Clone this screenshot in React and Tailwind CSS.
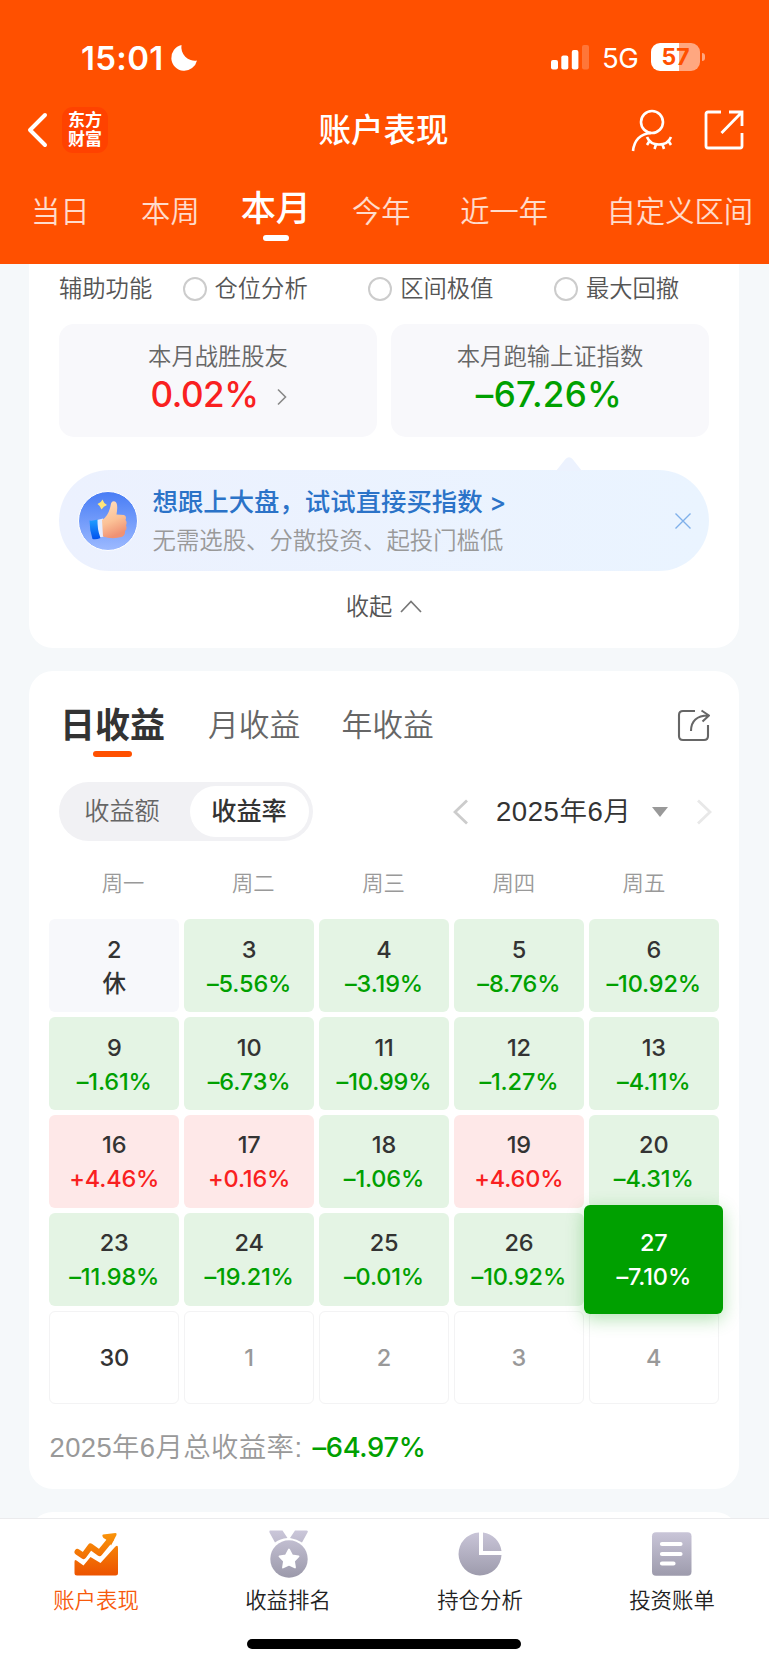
const ranges = [
  { label: '当日', cls: 'ml-[31px]' },
  { label: '本周', cls: 'ml-[51.5px]' },
  { label: '本月', cls: 'ml-[41px]', active: true },
  { label: '今年', cls: 'ml-[41px]' },
  { label: '近一年', cls: 'ml-[49.5px]' },
  { label: '自定义区间', cls: 'ml-[58.5px]' },
]

const helpers = ['仓位分析', '区间极值', '最大回撤']

const weekdays = ['周一', '周二', '周三', '周四', '周五']

const days = [
  { day: '2', rest: true },
  { day: '3', rate: -5.56 },
  { day: '4', rate: -3.19 },
  { day: '5', rate: -8.76 },
  { day: '6', rate: -10.92 },
  { day: '9', rate: -1.61 },
  { day: '10', rate: -6.73 },
  { day: '11', rate: -10.99 },
  { day: '12', rate: -1.27 },
  { day: '13', rate: -4.11 },
  { day: '16', rate: 4.46 },
  { day: '17', rate: 0.16 },
  { day: '18', rate: -1.06 },
  { day: '19', rate: 4.6 },
  { day: '20', rate: -4.31 },
  { day: '23', rate: -11.98 },
  { day: '24', rate: -19.21 },
  { day: '25', rate: -0.01 },
  { day: '26', rate: -10.92 },
  { day: '27', rate: -7.1, selected: true },
  { day: '30' },
  { day: '1', next: true },
  { day: '2', next: true },
  { day: '3', next: true },
  { day: '4', next: true },
]

function formatRate(r) {
  return `${r < 0 ? '–' : '+'}${Math.abs(r).toFixed(2)}%`
}

function StatusBar() {
  return (
    <div className="flex h-[98px] items-start pl-[81px] pr-[64px] pt-[38px]">
      <span className="w-[85px] text-[33px] font-semibold leading-[40px] tracking-[0.3px] whitespace-nowrap">15:01</span>
      <svg className="mt-[6px] ml-[4px] h-[28px] w-[28px]" viewBox="0 0 28 28" fill="white">
        <path d="M11.500 1 A13 13 0 1 0 27 16.500 A13.500 13.500 0 0 1 11.500 1Z" />
      </svg>
      <div className="flex-1" />
      <svg className="mt-[6px] h-[26px] w-[39px]" viewBox="0 0 39 26" fill="white">
        <rect x="0" y="16" width="7" height="9.500" rx="2" />
        <rect x="10.300" y="11.500" width="7" height="14" rx="2" />
        <rect x="20.800" y="6" width="6.600" height="19.500" rx="2" />
        <rect x="31" y="1" width="7" height="24.500" rx="2" opacity=".22" />
      </svg>
      <span className="ml-[12px] w-[49px] text-[27.500px] leading-[40px] tracking-[-0.500px]">5G</span>
      <div className="mt-[5px] flex h-[28px] w-[49px] items-center justify-center rounded-[9px] bg-[linear-gradient(90deg,#fff_58%,#ffa780_58%)] text-[23px] font-bold leading-none text-[#ff5000]">
        57
      </div>
      <div className="ml-[2px] mt-[15px] h-[8px] w-[3px] rounded-r-full bg-[#ffa780]" />
    </div>
  )
}

function Header() {
  return (
    <header className="h-[264px] shrink-0 bg-[#ff5000] text-white">
      <StatusBar />
      <div className="flex h-[64px] items-center pl-[27px] pr-[24px]">
        <svg className="h-[36px] w-[21px]" viewBox="0 0 21 36" fill="none" stroke="white" strokeWidth="4" strokeLinecap="round" strokeLinejoin="round">
          <path d="M18 3 L3 18 L18 33" />
        </svg>
        <div className="ml-[14px] grid h-[46px] w-[46px] place-content-center rounded-[11px] bg-[#ff4200] text-center text-[17px] font-bold leading-[19px]">
          <span>东方</span>
          <span>财富</span>
        </div>
        <h1 className="flex-1 pl-[82px] pr-[54px] pt-[1px] text-center text-[32.500px] font-medium leading-[40px] whitespace-nowrap">账户表现</h1>
        <svg className="h-[44px] w-[42px]" viewBox="0 0 42 44" fill="none" stroke="white" strokeWidth="2.600">
          <circle cx="21" cy="14" r="11" />
          <path d="M2 43 C3 33 9 25.500 20 25" />
          <path d="M16 29 C20 39 36 39 40 29 M18.500 33 L16 37 M25 36.500 L23.500 41 M31.500 36.500 L33 41 M37.500 33 L40 37" />
        </svg>
        <svg className="ml-[30px] h-[42px] w-[42px]" viewBox="0 0 42 42" fill="none" stroke="white" strokeWidth="2.800">
          <path d="M18 3 H5 a2 2 0 0 0 -2 2 V37 a2 2 0 0 0 2 2 H37 a2 2 0 0 0 2 -2 V24" />
          <path d="M26 3 H39 V17 M39 3 L18.500 24" />
        </svg>
      </div>
      <nav className="flex h-[96px] items-center whitespace-nowrap">
        {ranges.map((r) =>
          r.active ? (
            <div key={r.label} className={`${r.cls} flex flex-col items-center pt-[7px]`}>
              <span className="text-[35.200px] font-medium leading-[44px]">{r.label}</span>
              <span className="mt-[5px] h-[6px] w-[26px] rounded-full bg-white" />
            </div>
          ) : (
            <span key={r.label} className={`${r.cls} pt-[4px] text-[29.300px] font-[350] leading-[40px] text-white/80`}>
              {r.label}
            </span>
          )
        )}
      </nav>
    </header>
  )
}

function ThumbBadge() {
  return (
    <svg className="h-[60px] w-[60px] shrink-0" viewBox="0 0 60 60">
      <defs>
        <linearGradient id="badge" x1="0" y1="0" x2="0" y2="1">
          <stop offset="0" stopColor="#477cf5" />
          <stop offset="1" stopColor="#9dbaff" />
        </linearGradient>
        <linearGradient id="hand" x1="0" y1="0" x2="0.3" y2="1">
          <stop offset="0" stopColor="#ffe0c0" />
          <stop offset="0.6" stopColor="#fbc196" />
          <stop offset="1" stopColor="#ef9274" />
        </linearGradient>
        <linearGradient id="cuff" x1="0" y1="0" x2="0" y2="1">
          <stop offset="0" stopColor="#1fa0ff" />
          <stop offset="1" stopColor="#0050ee" />
        </linearGradient>
      </defs>
      <circle cx="30" cy="30" r="29.500" fill="url(#badge)" stroke="white" strokeWidth="1" />
      <path d="M19 29 L25 27.500 L26 45.500 L20 47Z" fill="#e4ecff" />
      <path d="M11.500 29.500 Q15 30 19.500 28.500 Q19 38 22.500 47 Q18 49 14.500 48 Q11.500 39 11.500 29.500Z" fill="url(#cuff)" />
      <path d="M24 29 Q31 25 33 12.500 Q34 9.500 37 10.500 Q40.500 12 38.500 23.500 L46 24 Q49 25 47.500 29 Q49.500 31 48 34.500 Q49.500 38 47 40 Q47.500 44.500 43.500 46 Q34 48.500 25 45.500Z" fill="url(#hand)" />
      <path d="M24.500 8.500 Q25.500 12 29 14 Q25.500 15 23.500 18.500 Q22.500 15 19.500 13 Q23 12 24.500 8.500Z" fill="#ffe57a" />
    </svg>
  )
}

function Overview() {
  return (
    <section className="ml-[29px] mr-[30px] h-[384px] shrink-0 rounded-b-[24px] bg-white px-[30px]">
      <div className="flex h-[60px] items-center pb-[10px] text-[23.300px] font-[350] leading-[36px] text-[#555] whitespace-nowrap">
        <span className="w-[123.500px] shrink-0">辅助功能</span>
        {helpers.map((h) => (
          <label key={h} className="flex w-[185.700px] shrink-0 items-center gap-[8px]">
            <span className="h-[24px] w-[24px] rounded-full border-2 border-[#ccc]" />
            {h}
          </label>
        ))}
      </div>
      <div className="grid grid-cols-2 gap-[14px] text-center">
        <div className="h-[113px] rounded-[15px] bg-[#f8f8fb] pt-[15px]">
          <p className="text-[23.300px] font-[350] leading-[36px] text-[#666]">本月战胜股友</p>
          <div className="flex h-[38px] items-center justify-center gap-[18px] pl-[1px]">
            <span className="text-[35px] font-medium leading-[38px] tracking-[-0.400px] text-[#f92020]">0.02%</span>
            <svg className="mt-[6px] h-[18px] w-[10px]" viewBox="0 0 10 18" fill="none" stroke="#888" strokeWidth="1.600">
              <path d="M1 1.500 L8.500 9 L1 16.500" />
            </svg>
          </div>
        </div>
        <div className="h-[113px] rounded-[15px] bg-[#f8f8fb] pt-[15px]">
          <p className="text-[23.300px] font-[350] leading-[36px] text-[#666]">本月跑输上证指数</p>
          <p className="pr-[2px] text-[35px] font-medium leading-[38px] tracking-[0.300px] text-[#00a000]">–67.26%</p>
        </div>
      </div>
      <div className="relative mt-[33px] flex h-[101px] items-center rounded-full bg-linear-to-r from-[#ecf1fe] to-[#eaf4ff] pl-[18.500px] pr-[17px]">
        <svg className="absolute -top-[13px] left-[497px] h-[14px] w-[26px]" viewBox="0 0 26 14" fill="#ecf2fe">
          <path d="M0 14 L9.500 2 Q13 -1.500 16.500 2 L26 14Z" />
        </svg>
        <ThumbBadge />
        <div className="ml-[15px] flex-1 pt-[1px] whitespace-nowrap">
          <p className="text-[25.400px] font-medium leading-[38px] text-[#2b73c8]">想跟上大盘，试试直接买指数 &gt;</p>
          <p className="pt-[1px] text-[23.400px] font-[350] leading-[38px] text-[#999]">无需选股、分散投资、起投门槛低</p>
        </div>
        <svg className="h-[18px] w-[18px]" viewBox="0 0 18 18" stroke="#7fb0ea" strokeWidth="1.400">
          <path d="M1.500 1.500 L16.500 16.500 M16.500 1.500 L1.500 16.500" />
        </svg>
      </div>
      <div className="flex h-[72px] items-center justify-center gap-[8px] pt-[1px] text-[23.300px] font-[350] text-[#555]">
        收起
        <svg className="-mt-[2px] h-[13px] w-[22px]" viewBox="0 0 22 13" fill="none" stroke="#777" strokeWidth="1.700">
          <path d="M1 12 L11 1.500 L21 12" />
        </svg>
      </div>
    </section>
  )
}

function DayCell({ d }) {
  if (d.rate == null && !d.rest) {
    return (
      <div className={`flex items-center justify-center rounded-[6px] border border-[#f3f3f4] bg-white ${d.next ? 'text-[#999]' : 'text-[#333]'}`}>
        {d.day}
      </div>
    )
  }
  let tone = 'bg-[#e4f4e4] text-[#00a000]'
  if (d.rest) tone = 'bg-[#f7f8fb] text-[#333]'
  else if (d.rate > 0) tone = 'bg-[#fee8e8] text-[#f92020]'
  if (d.selected) tone = 'relative z-10 -mx-[4.400px] -my-[8px] bg-[#00a000] text-white shadow-[0_5px_18px_rgba(0,160,0,0.3)]'
  return (
    <div className={`flex flex-col items-center justify-center rounded-[6px] pt-[2px] leading-[34px] ${tone}`}>
      <span className={d.selected ? 'text-white' : 'text-[#333]'}>{d.day}</span>
      <span>{d.rest ? '休' : formatRate(d.rate)}</span>
    </div>
  )
}

function Calendar() {
  return (
    <section className="ml-[29px] mr-[30px] mt-[23px] h-[818px] shrink-0 rounded-[24px] bg-white pt-[24px]">
      <div className="flex h-[68px] items-start pl-[31px] pr-[29px] whitespace-nowrap">
        <div className="flex flex-col items-center">
          <span className="text-[35px] font-bold leading-[60px] text-[#333]">日收益</span>
          <span className="-mt-[4px] h-[6px] w-[39px] rounded-full bg-[#ff5000]" />
        </div>
        <span className="ml-[43px] text-[30.800px] font-[350] leading-[60px] text-[#666]">月收益</span>
        <span className="ml-[41px] text-[30.800px] font-[350] leading-[60px] text-[#666]">年收益</span>
        <svg className="ml-auto mt-[14px] h-[34px] w-[33px]" viewBox="0 0 33 34" fill="none" stroke="#666" strokeWidth="2.100" strokeLinejoin="round">
          <path d="M18 2 H6 Q2 2 2 6 V27 Q2 31 6 31 H27 Q31 31 31 27 V16" />
          <path d="M14 22 C14 12 20 6.500 31 6.500 M24.500 1.500 L32 6.500 L25.500 12.500" />
        </svg>
      </div>
      <div className="mt-[19px] flex h-[59px] items-center pl-[30px] pr-[27px]">
        <div className="flex h-[59px] w-[254px] items-center rounded-full bg-[#f1f1f4] p-[4px] text-[25.200px] leading-[51px]">
          <span className="flex-1 pr-[9px] text-center font-[350] text-[#666]">收益额</span>
          <span className="w-[119px] rounded-full bg-white pr-[1px] text-center font-medium text-[#333]">收益率</span>
        </div>
        <svg className="ml-[140px] h-[26px] w-[15px]" viewBox="0 0 15 26" fill="none" stroke="#ccc" strokeWidth="2.800">
          <path d="M14 1.500 L2 13 L14 24.500" />
        </svg>
        <span className="ml-[28px] w-[134px] font-['Liberation_Sans','Noto_Sans_CJK_SC',sans-serif] text-[27.600px] font-[350] leading-[40px] tracking-[0.500px] text-[#333] whitespace-nowrap">2025年6月</span>
        <svg className="ml-[22px] h-[10px] w-[16px]" viewBox="0 0 16 10" fill="#999">
          <path d="M0 0 H16 L8 10Z" />
        </svg>
        <svg className="ml-auto h-[26px] w-[15px]" viewBox="0 0 15 26" fill="none" stroke="#e8e8e8" strokeWidth="2.800">
          <path d="M1 1.500 L13 13 L1 24.500" />
        </svg>
      </div>
      <div className="mt-[22px] grid h-[40px] grid-cols-5 pl-[29px] pr-[30px] text-center text-[21.300px] font-[350] leading-[40px] text-[#999]">
        {weekdays.map((w) => (
          <span key={w}>{w}</span>
        ))}
      </div>
      <div className="mx-[20px] mt-[16px] grid h-[485px] grid-cols-5 grid-rows-5 gap-[4.400px] text-[23.500px] font-medium tracking-[-0.150px]">
        {days.map((d, i) => (
          <DayCell key={i} d={d} />
        ))}
      </div>
      <p className="ml-[20.500px] mt-[24px] font-['Liberation_Sans','Noto_Sans_CJK_SC',sans-serif] text-[27.400px] font-[350] leading-[40px] tracking-[0.400px] text-[#999] whitespace-nowrap">
        2025年6月总收益率:
        <span className="ml-[10px] font-['Inter',sans-serif] text-[27.300px] font-medium tracking-[-0.300px] text-[#00a000]">–64.97%</span>
      </p>
    </section>
  )
}

function ChartIcon() {
  return (
    <svg className="h-[48px] w-[48px]" viewBox="0 0 48 48">
      <defs>
        <linearGradient id="orange" x1="0" y1="2" x2="0" y2="46" gradientUnits="userSpaceOnUse">
          <stop offset="0" stopColor="#fa960a" />
          <stop offset="1" stopColor="#ec5200" />
        </linearGradient>
      </defs>
      <path d="M2.500 32 Q2.500 29 4.500 30.500 L11.500 35.500 L18.500 27 L28.500 33 L43 17 Q46 14 46 18 V43 Q46 45.500 43.500 45.500 H5 Q2.500 45.500 2.500 43Z" fill="url(#orange)" />
      <path d="M5.500 22 L11.500 26 L18.500 16.500 L27.500 23 L39 9" fill="none" stroke="url(#orange)" strokeWidth="6" strokeLinecap="round" strokeLinejoin="round" />
      <path d="M31 4.500 L43.500 3 Q45 3 44.500 5 L39 15.500 Q37 11 31.500 8 Q29.500 5.500 31 4.500Z" fill="url(#orange)" />
    </svg>
  )
}

function GreyGradient({ id }) {
  return (
    <defs>
      <linearGradient id={id} x1="0" y1="0" x2="0" y2="48" gradientUnits="userSpaceOnUse">
        <stop offset="0" stopColor="#cbc7da" />
        <stop offset="1" stopColor="#9b99aa" />
      </linearGradient>
    </defs>
  )
}

function MedalIcon() {
  return (
    <svg className="h-[48px] w-[48px]" viewBox="0 0 48 48">
      <GreyGradient id="medal" />
      <path d="M6 .5 H18.500 L23.500 8 Q16 8.500 11 12.500 L5.500 2.500 Q5 .5 6 .5Z M31 .5 H42.500 Q44.500 .5 43.500 2.500 L38 12.500 Q33 9 26 8Z" fill="url(#medal)" />
      <circle cx="25" cy="29" r="18.700" fill="url(#medal)" />
      <path d="M25 19.500 L28.200 25.500 L34.500 26.500 L30 31.200 L31 37.500 L25 34.700 L19 37.500 L20 31.200 L15.500 26.500 L21.800 25.500Z" fill="white" stroke="white" strokeWidth="1.800" strokeLinejoin="round" />
    </svg>
  )
}

function PieIcon() {
  return (
    <svg className="h-[48px] w-[48px]" viewBox="0 0 48 48">
      <GreyGradient id="pie" />
      <path d="M23 2.500 V25 H45.500 A21.500 21.500 0 1 1 23 2.500Z M27 2.500 A21.500 21.500 0 0 1 45.500 21 H27Z" fill="url(#pie)" />
    </svg>
  )
}

function BillIcon() {
  return (
    <svg className="h-[48px] w-[48px]" viewBox="0 0 48 48">
      <GreyGradient id="bill" />
      <rect x="4" y="2.300" width="39.500" height="43.400" rx="4" fill="url(#bill)" />
      <path d="M14 14 H32.500 M14 24 H32.500 M14 33.500 H25.500" stroke="white" strokeWidth="4.200" strokeLinecap="round" />
    </svg>
  )
}

const tabs = [
  { label: '账户表现', Icon: ChartIcon, active: true },
  { label: '收益排名', Icon: MedalIcon },
  { label: '持仓分析', Icon: PieIcon },
  { label: '投资账单', Icon: BillIcon },
]

function TabBar() {
  return (
    <footer className="flex h-[147px] shrink-0 flex-col border-t border-[#ebebed] bg-white">
      <div className="grid h-[120px] grid-cols-4 pr-[1px] pt-[11px]">
        {tabs.map(({ label, Icon, active }) => (
          <div key={label} className="flex flex-col items-center">
            <Icon />
            <span className={`mt-[5px] text-[21.400px] font-[350] leading-[34px] ${active ? 'text-[#f75a0c]' : 'text-[#222]'}`}>{label}</span>
          </div>
        ))}
      </div>
      <div className="ml-[247px] h-[10px] w-[274px] rounded-full bg-black" />
    </footer>
  )
}

export default function App() {
  return (
    <div className="flex h-[1665px] w-[769px] flex-col overflow-hidden bg-[#f5f8fa] font-['Inter','Noto_Sans_CJK_SC',sans-serif]">
      <Header />
      <Overview />
      <Calendar />
      {/* top edge of the next card, cut off by the tab bar */}
      <div className="ml-[29px] mr-[30px] mt-[23px] h-[6px] shrink-0 overflow-hidden">
        <div className="h-[60px] rounded-[24px] bg-white" />
      </div>
      <TabBar />
    </div>
  )
}
